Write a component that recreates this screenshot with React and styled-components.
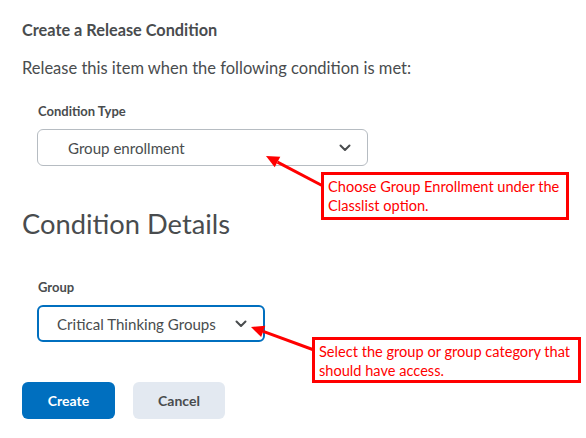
import styled, { createGlobalStyle } from "styled-components";

const GlobalStyle = createGlobalStyle`
  html, body {
    margin: 0;
    padding: 0;
    background: #ffffff;
  }
  body {
    font-family: Lato, "Open Sans", sans-serif;
    color: #494c4e;
  }
`;

const Page = styled.div`
  position: relative;
  width: 586px;
  height: 438px;
  padding: 18px 0 0 22px;
  box-sizing: border-box;
  overflow: hidden;
`;

const Title = styled.h2`
  margin: 0;
  font-size: 16.3px;
  line-height: 24px;
  font-weight: 700;
  color: #494c4e;
`;

const Intro = styled.p`
  margin: 14px 0 0;
  font-size: 16.5px;
  line-height: 24px;
  color: #494c4e;
`;

const Field = styled.div`
  display: flex;
  flex-direction: column;
  align-items: flex-start;
  gap: 9px;
  margin: ${(p) => p.$top}px 0 0 15px;
`;

const Label = styled.label`
  font-size: 13px;
  line-height: 18px;
  font-weight: 700;
  color: #494c4e;
  padding-left: 1px;
`;

const Select = styled.div`
  display: flex;
  align-items: center;
  justify-content: space-between;
  box-sizing: border-box;
  width: ${(p) => p.$width}px;
  height: 37px;
  padding: 0 16px 0 ${(p) => p.$pad}px;
  border-radius: 6px;
  border: ${(p) => (p.$focused ? "2px solid #006fbf" : "1px solid #b6bcc2")};
  font-size: 15.1px;
  color: #494c4e;
  background: #fff;
`;

const Chevron = () => (
  <svg width="12" height="8" viewBox="0 0 12 8">
    <path d="M1.5 1.5 L6 6 L10.5 1.5" fill="none" stroke="#494c4e" strokeWidth="2" strokeLinecap="round" strokeLinejoin="round" />
  </svg>
);

const Heading = styled.h1`
  margin: 41px 0 0;
  font-size: 27.3px;
  line-height: 34px;
  font-weight: 400;
  color: #494c4e;
`;

const Buttons = styled.div`
  display: flex;
  gap: 18px;
  margin-top: 40px;
`;

const Button = styled.button`
  width: ${(p) => p.$width}px;
  height: 37px;
  border: none;
  border-radius: 6px;
  font-family: Lato, sans-serif;
  font-size: 14px;
  font-weight: 700;
  background: ${(p) => (p.$primary ? "#006fbf" : "#e3e9f1")};
  color: ${(p) => (p.$primary ? "#ffffff" : "#494c4e")};
`;

const Callout = styled.div`
  position: absolute;
  left: ${(p) => p.$x}px;
  top: ${(p) => p.$y}px;
  width: ${(p) => p.$w}px;
  height: ${(p) => p.$h}px;
  box-sizing: border-box;
  border: 3px solid #ff0000;
  background: #fff;
  padding: 2px 4px;
  font-family: Lato, sans-serif;
  font-size: 14.6px;
  line-height: 19px;
  color: #ff0000;
`;

const Arrows = styled.svg`
  position: absolute;
  left: 0;
  top: 0;
  pointer-events: none;
`;

const Arrow = ({ x1, y1, x2, y2 }) => {
  const a = Math.atan2(y2 - y1, x2 - x1);
  const len = 13;
  const w = 6;
  const bx = x2 - Math.cos(a) * len;
  const by = y2 - Math.sin(a) * len;
  const px = -Math.sin(a) * w;
  const py = Math.cos(a) * w;
  return (
    <g>
      <line x1={x1} y1={y1} x2={bx} y2={by} stroke="#ff0000" strokeWidth="3" />
      <polygon points={`${x2},${y2} ${bx + px},${by + py} ${bx - px},${by - py}`} fill="#ff0000" />
    </g>
  );
};

export default function App() {
  return (
    <>
      <GlobalStyle />
      <Page>
        <Title>Create a Release Condition</Title>
        <Intro>Release this item when the following condition is met:</Intro>
        <Field $top={22}>
          <Label>Condition Type</Label>
          <Select $width={331} $pad={30}>
            <span>Group enrollment</span>
            <Chevron />
          </Select>
        </Field>
        <Heading>Condition Details</Heading>
        <Field $top={37}>
          <Label>Group</Label>
          <Select $width={228} $pad={18} $focused>
            <span>Critical Thinking Groups</span>
            <Chevron />
          </Select>
        </Field>
        <Buttons>
          <Button $primary $width={93}>Create</Button>
          <Button $width={92}>Cancel</Button>
        </Buttons>

        <Arrows width="586" height="438">
          <Arrow x1={323} y1={186} x2={266} y2={156} />
          <Arrow x1={314} y1={350} x2={251} y2={327} />
        </Arrows>
        <Callout $x={321} $y={172} $w={248} $h={48}>
          Choose Group Enrollment under the Classlist option.
        </Callout>
        <Callout $x={312} $y={337} $w={269} $h={46}>
          Select the group or group category that should have access.
        </Callout>
      </Page>
    </>
  );
}
